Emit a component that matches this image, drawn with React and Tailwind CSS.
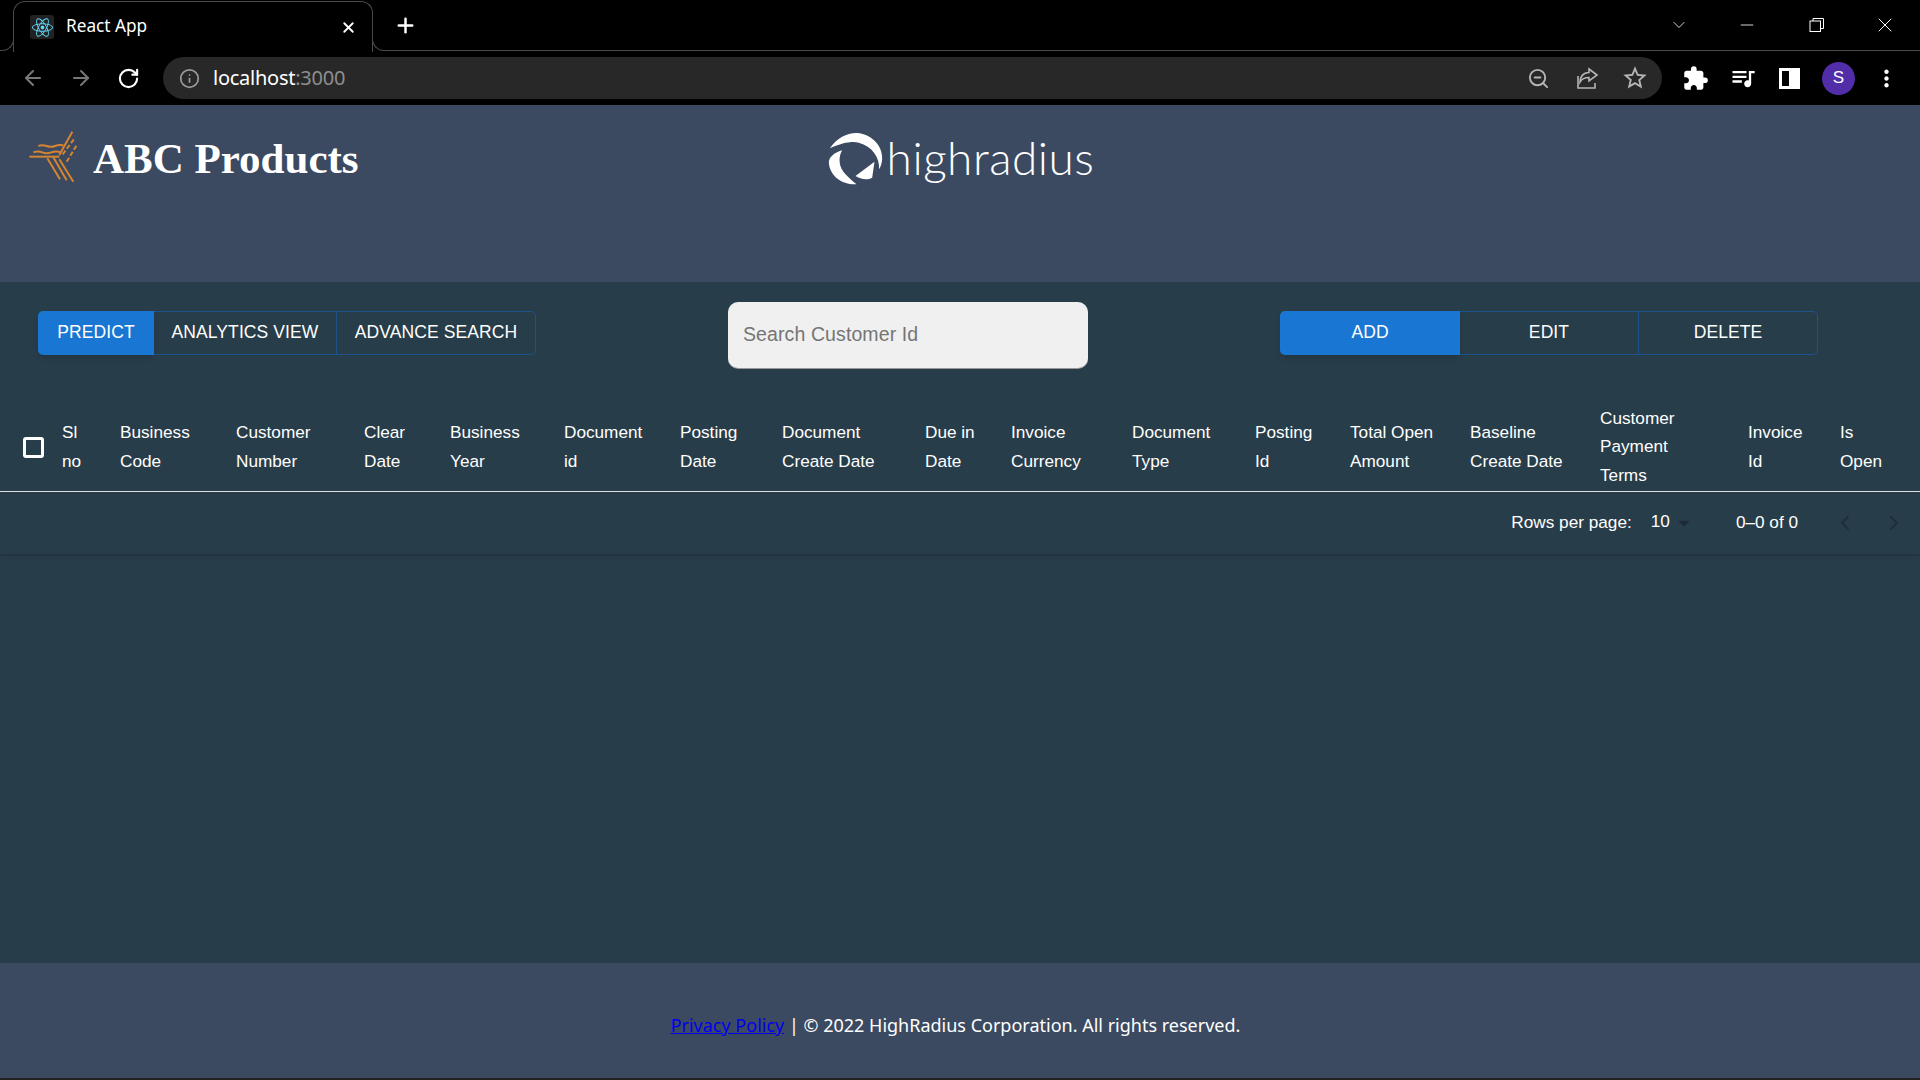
import React from "react";
import { ArrowLeft, ArrowRight, RotateCw, Info, ZoomOut, Plus, X, ChevronDown, Minus, ChevronLeft, ChevronRight } from "lucide-react";
import { FaReact } from "react-icons/fa";
import { MdExtension, MdQueueMusic, MdStarBorder, MdMoreVert, MdArrowDropDown } from "react-icons/md";

const columns = [
  { w: "w-[58px]", lines: ["Sl", "no"] },
  { w: "w-[116px]", lines: ["Business", "Code"] },
  { w: "w-[128px]", lines: ["Customer", "Number"] },
  { w: "w-[86px]", lines: ["Clear", "Date"] },
  { w: "w-[114px]", lines: ["Business", "Year"] },
  { w: "w-[116px]", lines: ["Document", "id"] },
  { w: "w-[102px]", lines: ["Posting", "Date"] },
  { w: "w-[143px]", lines: ["Document", "Create Date"] },
  { w: "w-[86px]", lines: ["Due in", "Date"] },
  { w: "w-[121px]", lines: ["Invoice", "Currency"] },
  { w: "w-[123px]", lines: ["Document", "Type"] },
  { w: "w-[95px]", lines: ["Posting", "Id"] },
  { w: "w-[120px]", lines: ["Total Open", "Amount"] },
  { w: "w-[130px]", lines: ["Baseline", "Create Date"] },
  { w: "w-[148px]", lines: ["Customer", "Payment", "Terms"] },
  { w: "w-[92px]", lines: ["Invoice", "Id"] },
  { w: "w-[70px]", lines: ["Is", "Open"] },
];

function BrowserChrome() {
  return (
    <div className="bg-black h-[105px] text-white">
      <div className="flex h-[51px]">
        <div className="w-[14px] h-[14px] self-end -mr-px border-r border-b border-[#4a4a4a] rounded-br-[12px]" />
        <div className="w-[360px] h-[51px] mt-px flex items-center pl-[16px] pr-[15px] border-t border-x border-[#4a4a4a] rounded-t-[12px] bg-black">
          <div className="w-6 h-6 rounded-[3px] bg-[#222] flex items-center justify-center">
            <FaReact size={21} className="text-[#61dafb]" />
          </div>
          <span className="ml-[12px] -mt-[2px] text-[17.2px] font-['Noto_Sans',sans-serif] flex-1">React App</span>
          <X size={17} strokeWidth={2.6} />
        </div>
        <div className="w-[14px] h-[14px] self-end -ml-px border-l border-b border-[#4a4a4a] rounded-bl-[12px]" />
        <div className="flex-1 flex items-center border-b border-[#4a4a4a] pl-[8px]">
          <Plus size={23} strokeWidth={2.6} />
          <div className="ml-auto flex items-center">
            <ChevronDown size={20} strokeWidth={1} />
            <Minus size={20} strokeWidth={1} className="ml-[48px]" />
            <svg width="16" height="16" viewBox="0 0 16 16" fill="none" stroke="white" className="ml-[52px]">
              <rect x="1" y="4" width="10.5" height="10.5" />
              <path d="M4 4V1.5H14.5V11.5H11.5" />
            </svg>
            <X size={24} strokeWidth={1} className="ml-[48px] mr-[23px]" />
          </div>
        </div>
      </div>
      <div className="flex items-center h-[54px]">
        <ArrowLeft size={24} className="ml-[21px] text-[#777]" />
        <ArrowRight size={24} className="ml-[24px] text-[#777]" />
        <RotateCw size={23} strokeWidth={2.2} className="ml-[24px]" />
        <div className="ml-[23px] w-[1499px] h-[42px] rounded-full bg-[#282828] flex items-center pl-[16px]">
          <Info size={21} className="text-[#9a9a9a]" />
          <span className="ml-[13px] text-[20px] font-['Noto_Sans',sans-serif] tracking-[-0.25px]">
            localhost<span className="text-[#8e8e8e]">:3000</span>
          </span>
          <div className="ml-auto flex items-center text-[#b5b5b5]">
            <ZoomOut size={23} />
            <svg width="24" height="24" viewBox="0 0 24 24" fill="none" stroke="currentColor" strokeWidth="1.6" className="ml-[25px]">
              <path d="M21 4v0M3 10v12h17v-5" />
              <path d="M14 3l8 6-8 6v-3.5c-4 0-7 1-9 4.5 0-5 3-9.5 9-9.5z" />
            </svg>
            <MdStarBorder size={28} className="ml-[22px] mr-[13px]" />
          </div>
        </div>
        <MdExtension size={27} className="ml-[20px]" />
        <MdQueueMusic size={28} className="ml-[20px]" />
        <div className="ml-[22px] w-[21px] h-[21px] border-[3px] border-white flex justify-end bg-black">
          <div className="w-[8px] bg-white" />
        </div>
        <div className="ml-[22px] w-[33px] h-[33px] rounded-full bg-[#512da8] flex items-center justify-center text-[17px] font-['Liberation_Sans',sans-serif]">S</div>
        <MdMoreVert size={27} className="ml-[18px]" />
      </div>
    </div>
  );
}

function BrandHeader() {
  return (
    <header className="h-[177px] bg-[#3b4a60] text-white flex items-start">
      <svg width="80" height="70" viewBox="0 0 240 210" fill="none" stroke="#d58431" strokeWidth="6" className="ml-[20px] mt-[15px] shrink-0">
        <path d="M55 78q12-5 25 0t25 0 25-2" />
        <path d="M40 97q14-5 27 0t27 0 26-1" />
        <path d="M28 110H118" />
        <path d="M82 115L120 178M100 112L140 181M118 118L160 185" />
        <path d="M118 105L157 35" />
        <path d="M128 103L166 52" strokeDasharray="14 7" />
        <path d="M140 125L172 72" strokeDasharray="14 7" />
      </svg>
      <h1 className="ml-[-7px] mt-[22px] text-[43px] leading-[64px] font-bold font-['Liberation_Serif',serif] whitespace-nowrap">ABC Products</h1>
      <div className="ml-[468px] mt-[25px] flex items-center">
        <svg width="57" height="55" viewBox="80 60 170 165" fill="white" className="shrink-0">
          <path d="M88 112C110 80 140 65 170 66C215 70 247 105 245 145C244 155 242 165 236 175C238 140 215 105 175 95C155 90 125 95 88 112Z" />
          <path d="M125 118C112 140 115 170 135 190C145 200 155 210 168 220C125 222 88 195 85 155C85 140 100 125 125 118Z" />
          <path d="M165 195L222 152L215 200C200 208 180 205 165 195Z" />
        </svg>
        <span className="ml-[3px] text-[46px] leading-[56px] font-light font-['Lato',sans-serif] tracking-[0.5px]">highradius</span>
      </div>
    </header>
  );
}

function Toolbar() {
  const tab = "flex items-center justify-center pb-[2px] text-[17.5px] tracking-[0.1px] uppercase";
  return (
    <div className="flex items-start pt-[20px]">
      <div className="ml-[38px] mt-[9px] h-[44px] flex rounded-[5px] border border-[#1c5388]">
        <div className={`${tab} w-[116px] -m-px bg-[#1976d2] rounded-l-[5px] shadow-md`}>Predict</div>
        <div className={`${tab} w-[183px] ml-px border-r border-[#1c5388]`}>Analytics View</div>
        <div className={`${tab} w-[198px]`}>Advance Search</div>
      </div>
      <div className="ml-[192px] w-[360px] h-[66px] rounded-[10px] bg-[#f0f0f0] flex items-center pl-[15px] text-[19.5px] text-[#757575] tracking-[0.1px] shadow-[0_1px_0_#999]">
        Search Customer Id
      </div>
      <div className="ml-[192px] mt-[9px] h-[44px] flex rounded-[5px] border border-[#1c5388]">
        <div className={`${tab} w-[180px] -m-px bg-[#1976d2] rounded-l-[5px] shadow-md`}>Add</div>
        <div className={`${tab} w-[179px] ml-px border-r border-[#1c5388]`}>Edit</div>
        <div className={`${tab} w-[178px]`}>Delete</div>
      </div>
    </div>
  );
}

function DataTable() {
  return (
    <div className="mt-[31px] h-[156px] border-b border-[#22323e] shadow-sm">
      <div className="flex h-[93px] pt-[3px] items-center border-b border-[#e0e0e0] text-[17.2px] leading-[28.5px]">
        <div className="w-[62px] shrink-0 pl-[23px]">
          <div className="w-[21px] h-[21px] mt-[2px] rounded-[3px] border-[3px] border-white" />
        </div>
        {columns.map((col) => (
          <div key={col.lines.join(" ")} className={`${col.w} shrink-0`}>
            {col.lines.map((line) => (
              <div key={line}>{line}</div>
            ))}
          </div>
        ))}
      </div>
      <div className="flex items-center justify-end h-[62px] text-[17.2px]">
        <span>Rows per page:</span>
        <span className="ml-[19px] -mt-[2px]">10</span>
        <MdArrowDropDown size={28} className="text-[#1b2a35]" />
        <span className="ml-[38px]">0–0 of 0</span>
        <ChevronLeft size={24} className="ml-[35px] text-[#1f2f3b]" />
        <ChevronRight size={24} className="ml-[25px] mr-[14px] text-[#1f2f3b]" />
      </div>
    </div>
  );
}

export default function App() {
  return (
    <div className="w-[1920px] h-[1080px] overflow-hidden flex flex-col bg-[#222] font-['Liberation_Sans',Arial,sans-serif]">
      <BrowserChrome />
      <BrandHeader />
      <main className="h-[681px] bg-[#283d4a] text-white">
        <Toolbar />
        <DataTable />
      </main>
      <footer className="h-[115px] bg-[#3b4a60] text-white flex items-center justify-center text-[18px] font-['Noto_Sans',sans-serif] pt-[10px] pr-[9px]">
        <a href="#" className="text-[#0000ee] underline">Privacy Policy</a>
        <span className="whitespace-pre"> | © 2022 HighRadius Corporation. All rights reserved.</span>
      </footer>
    </div>
  );
}
